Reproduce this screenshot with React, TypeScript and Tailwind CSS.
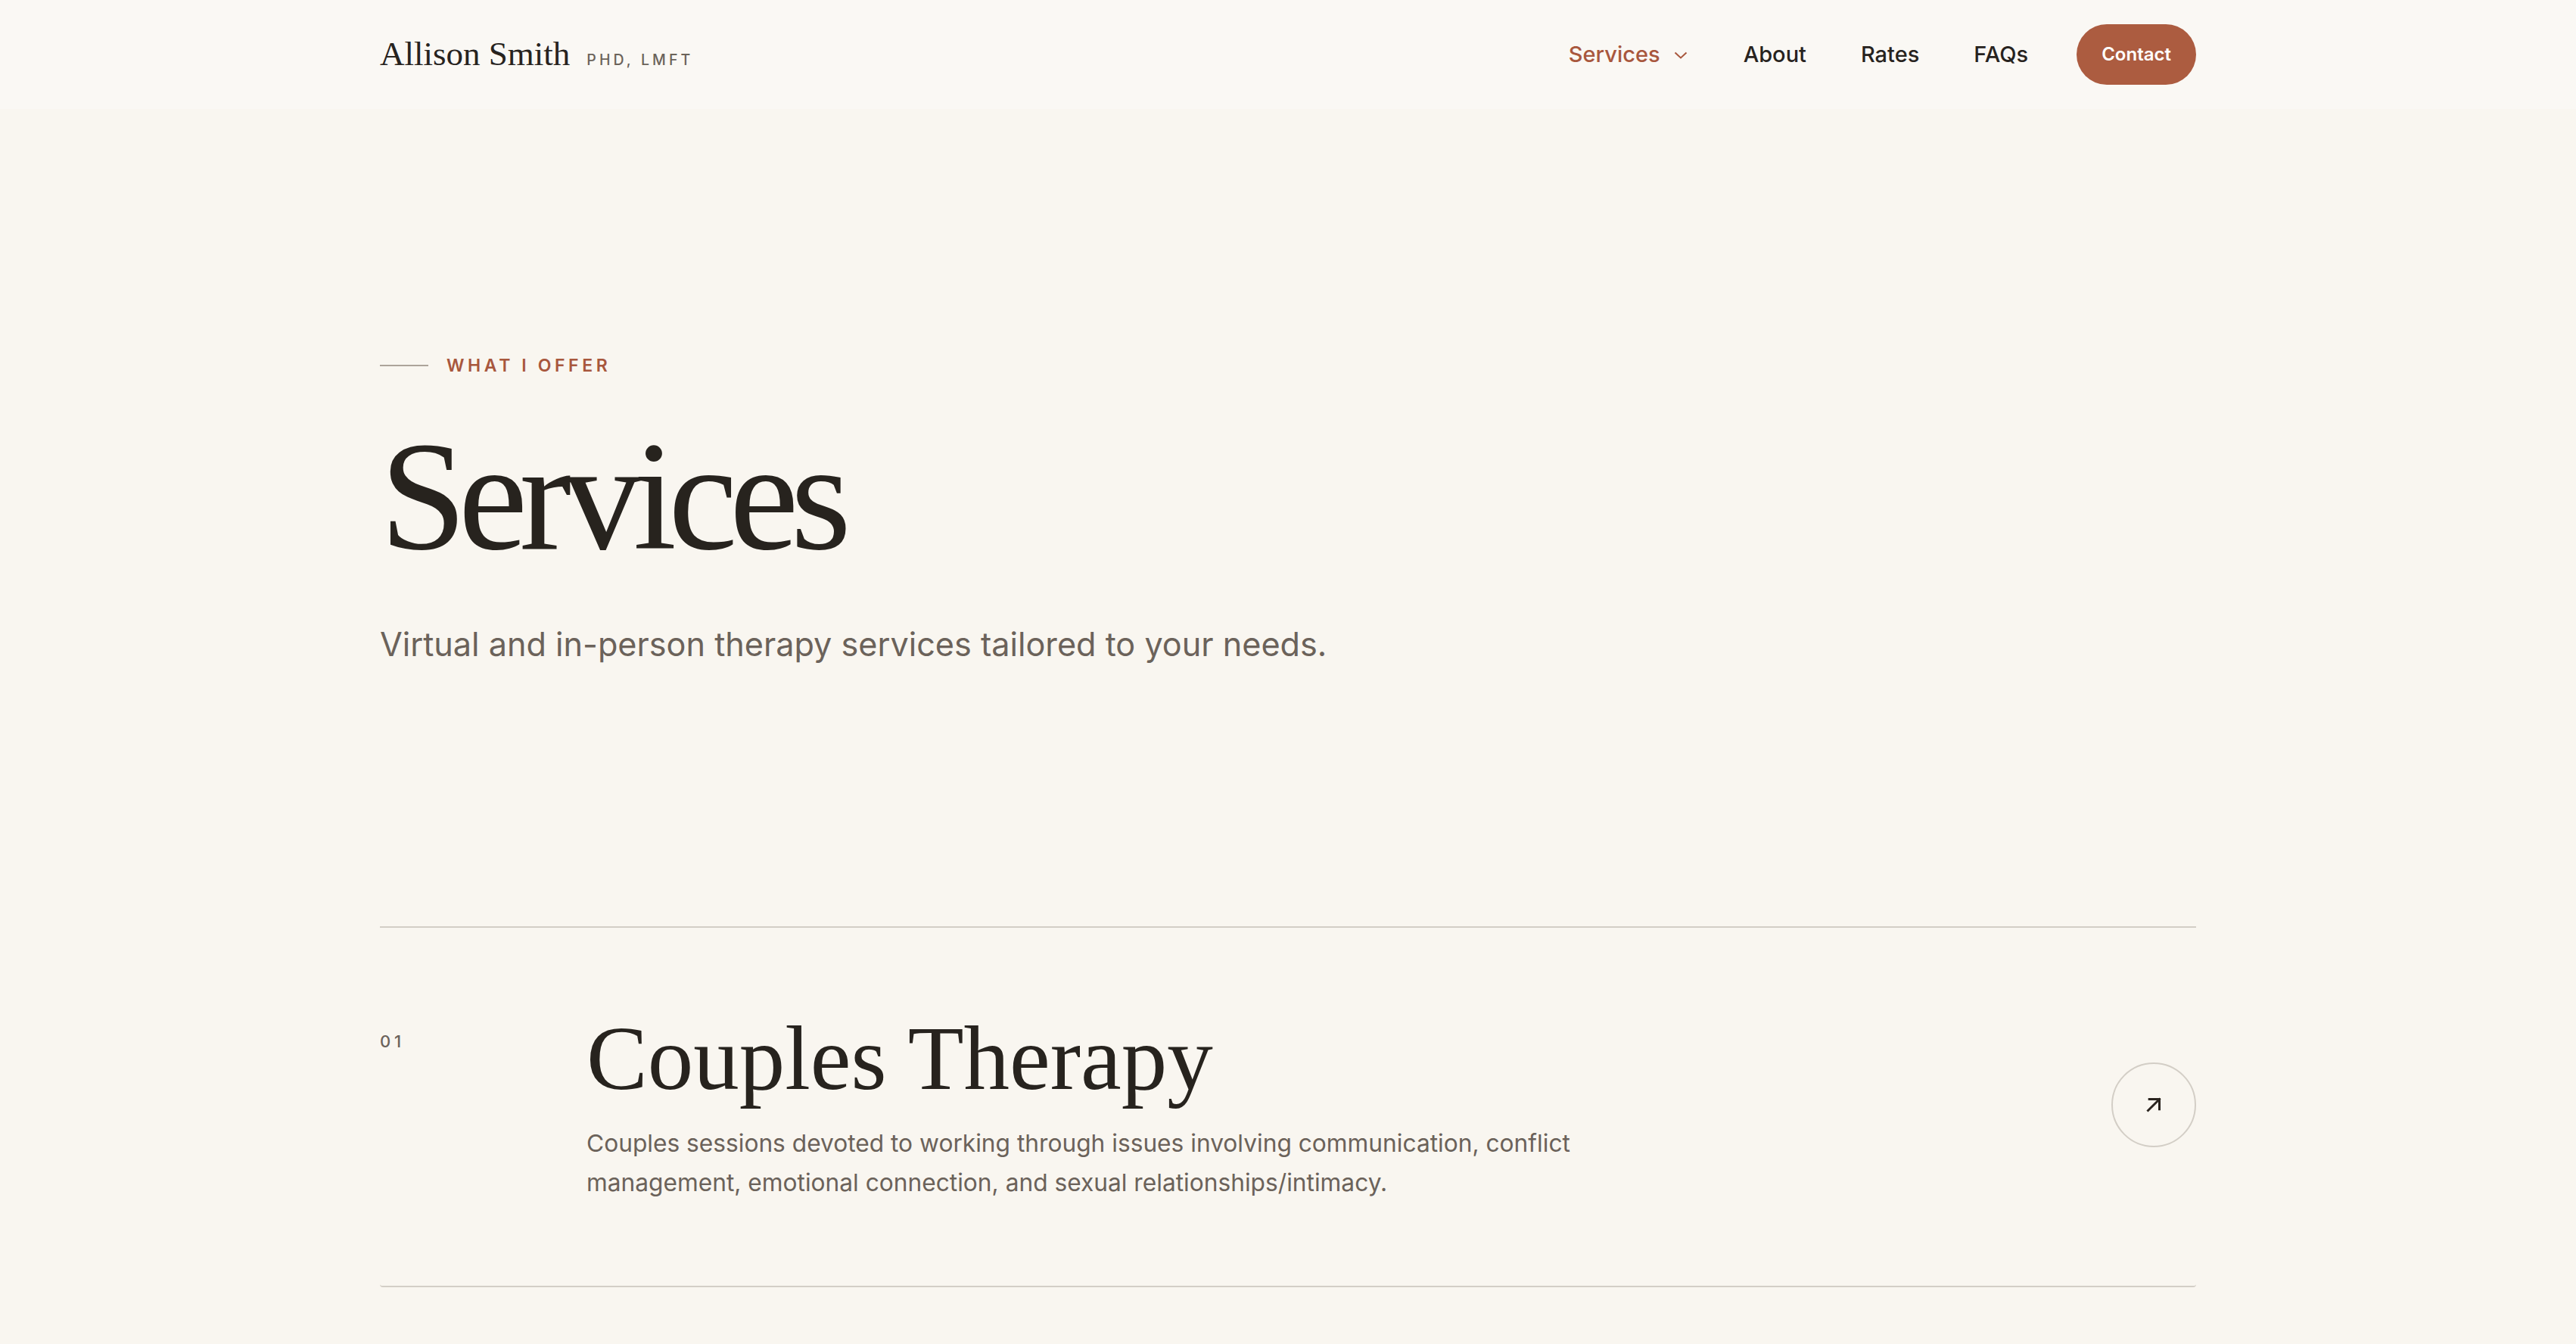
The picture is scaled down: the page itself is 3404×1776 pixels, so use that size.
import React from 'react'

const serif = "font-['Liberation_Serif','Times_New_Roman',serif]"
const sans = "font-['Inter','Liberation_Sans',sans-serif]"

function Chevron() {
  return (
    <svg width="18" height="12" viewBox="0 0 18 12" fill="none" className="mt-[2px]">
      <path d="M1.5 2.5 L9 9.5 L16.5 2.5" stroke="currentColor" strokeWidth="2" />
    </svg>
  )
}

function ArrowUpRight() {
  return (
    <svg width="40" height="40" viewBox="0 0 24 24" fill="none" stroke="#2a241f" strokeWidth="1.8" strokeLinecap="square">
      <path d="M7.5 16.5 L16.5 7.5" />
      <path d="M8.5 7.5 H16.5 V15.5" />
    </svg>
  )
}

function Header() {
  return (
    <header className="h-[144px] bg-[#faf8f4]">
      <div className="mx-auto flex h-full w-[2400px] items-center justify-between">
        <div className="flex items-baseline gap-[22px]">
          <span className={`${serif} text-[45px] text-[#27231e]`}>Allison Smith</span>
          <span className={`${sans} text-[19.5px] font-medium tracking-[0.21em] text-[#6b635a]`}>PHD, LMFT</span>
        </div>
        <nav className={`${sans} flex items-center text-[29px] font-medium`}>
          <a className="flex items-center gap-[18px] text-[#a8573d]">
            Services
            <Chevron />
          </a>
          <a className="ml-[74px] text-[#27231e]">About</a>
          <a className="ml-[72px] text-[#27231e]">Rates</a>
          <a className="ml-[72px] text-[#27231e]">FAQs</a>
          <button className="ml-[64px] h-[80px] rounded-full bg-[#ac5c40] px-[33px] text-[24px] font-semibold text-white">
            Contact
          </button>
        </nav>
      </div>
    </header>
  )
}

function ServiceRow({ num, title, desc }: { num: string; title: string; desc: string }) {
  return (
    <div className="flex items-center rounded-[4px] border-b-2 border-[#d3cec6] pt-[106px] pb-[110px]">
      <div className="flex flex-1 items-start">
        <div className={`${sans} mt-[28px] w-[273px] shrink-0 text-[22px] font-medium tracking-[0.22em] text-[#6b625a]`}>
          {num}
        </div>
        <div>
          <h2 className={`${serif} text-[121px] leading-[1.1] text-[#27231e]`}>{title}</h2>
          <p className={`${sans} mt-[20px] max-w-[1380px] text-[31.7px] leading-[52px] text-[#6b625a]`}>{desc}</p>
        </div>
      </div>
      <div className="flex h-[112px] w-[112px] shrink-0 items-center justify-center rounded-full border-2 border-[#d3cec6]">
        <ArrowUpRight />
      </div>
    </div>
  )
}

export default function App() {
  return (
    <div className="min-h-screen bg-[#f9f6f0]">
      <Header />
      <main className="mx-auto w-[2400px]">
        <section className="pt-[323px] pb-[340px]">
          <div className="flex items-center gap-[24px]">
            <div className="h-[2px] w-[64px] bg-[#aca49a]" />
            <span className={`${sans} text-[23px] leading-[32px] font-semibold tracking-[0.2em] text-[#a8573d]`}>
              WHAT I OFFER
            </span>
          </div>
          <h1 className={`${serif} mt-[54px] text-[206px] leading-none tracking-[-0.052em] text-[#27231e]`}>Services</h1>
          <p className={`${sans} mt-[60px] text-[43.2px] leading-[1.5] text-[#6b625a]`}>
            Virtual and in-person therapy services tailored to your needs.
          </p>
        </section>
        <div className="border-t-2 border-[#d3cec6]">
          <ServiceRow
            num="01"
            title="Couples Therapy"
            desc="Couples sessions devoted to working through issues involving communication, conflict management, emotional connection, and sexual relationships/intimacy."
          />
        </div>
      </main>
    </div>
  )
}
